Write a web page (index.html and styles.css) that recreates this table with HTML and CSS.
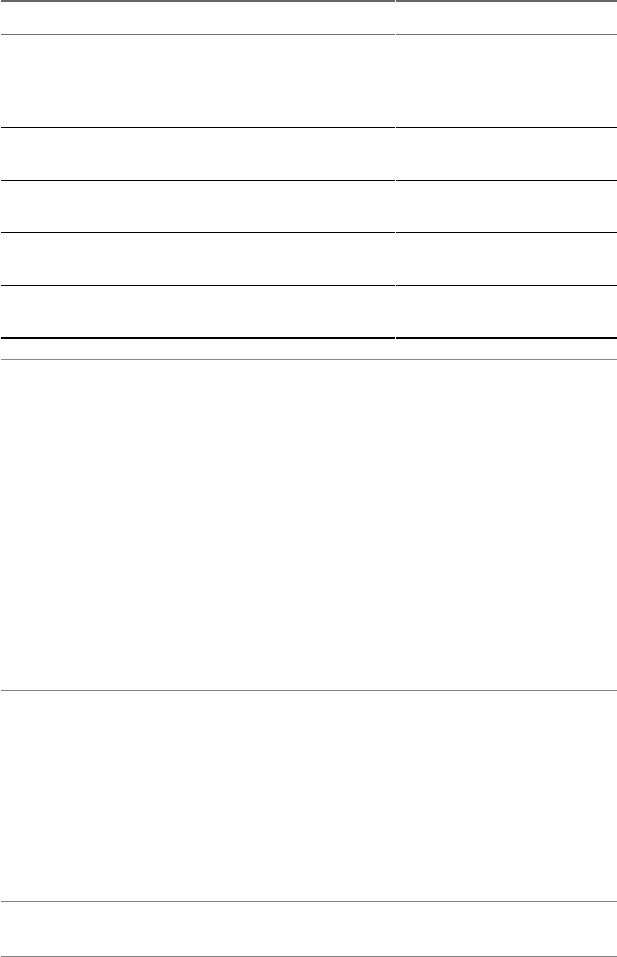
FILE: index.html
```html
<!DOCTYPE html>
<html>
<head>
	<title>Table</title>
	<link rel="stylesheet" href="styles.css">
</head>
<body>
	<div class="frame">
		<table class="grid">
			<thead>
				<tr>
					<th class="col_main"></th>
					<th class="col_side"></th>
				</tr>
			</thead>
			<tbody>
				<tr class="row_tall">
					<td></td>
					<td></td>
				</tr>
				<tr class="row_a">
					<td></td>
					<td></td>
				</tr>
				<tr class="row_b">
					<td></td>
					<td></td>
				</tr>
				<tr class="row_a">
					<td></td>
					<td></td>
				</tr>
				<tr class="row_last">
					<td></td>
					<td></td>
				</tr>
			</tbody>
		</table>
		<div class="list">
			<div class="list_item item_big"></div>
			<div class="list_item item_mid"></div>
			<div class="list_item item_small"></div>
		</div>
	</div>
</body>
</html>
```

FILE: styles.css
```css
*
{
	margin: 0px;
	padding: 0px;
	box-sizing: border-box;
}
html, body
{
	background-color: #fff;
	color: #222;
	font-family: "Liberation Sans", Arial, sans-serif;
	font-size: 14px;
	overflow: hidden;
}
.frame
{
	width: 100%;
	overflow: hidden;
}
.grid
{
	width: 618px;
	border-collapse: separate;
	border-spacing: 1px 0px;
	table-layout: fixed;
}
.col_main
{
	width: 394px;
}
.col_side
{
	width: 221px;
}
.grid th
{
	height: 35px;
	border-top: 2px solid #666;
	border-bottom: 1px solid #707070;
}
.grid td
{
	border-bottom: 1px solid #000;
}
.row_tall td
{
	height: 93px;
}
.row_a td
{
	height: 53px;
}
.row_b td
{
	height: 52px;
}
.row_last td
{
	height: 53px;
	border-bottom: 2px solid #000;
}
.list
{
	margin-top: 20px;
	margin-left: 1px;
	border-top: 1px solid #888;
}
.list_item
{
	border-bottom: 1px solid #808080;
}
.item_big
{
	height: 331px;
}
.item_mid
{
	height: 211px;
}
.item_small
{
	height: 55px;
}
```
